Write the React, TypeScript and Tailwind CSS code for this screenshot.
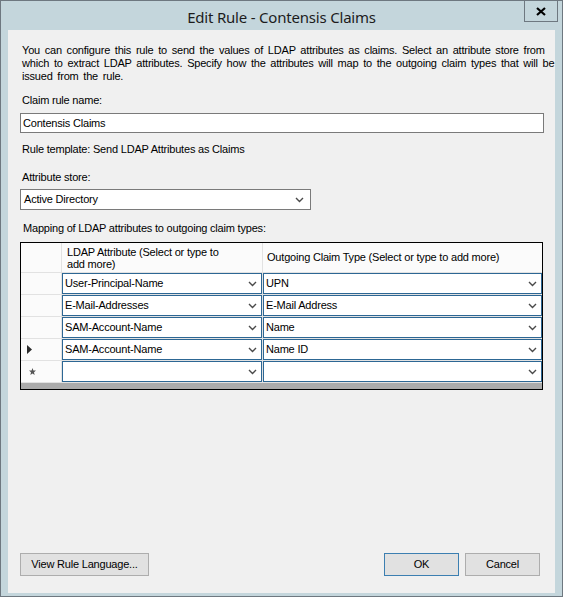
import React from "react";

const ROWS: { attr: string; claim: string; glyph?: "current" | "new" }[] = [
  { attr: "User-Principal-Name", claim: "UPN" },
  { attr: "E-Mail-Addresses", claim: "E-Mail Address" },
  { attr: "SAM-Account-Name", claim: "Name" },
  { attr: "SAM-Account-Name", claim: "Name ID", glyph: "current" },
  { attr: "", claim: "", glyph: "new" },
];

function Chevron() {
  return (
    <svg width="9" height="6" viewBox="0 0 9 6" className="shrink-0">
      <path d="M1 1 L4.5 4.5 L8 1" fill="none" stroke="#4a4a4a" strokeWidth="1.4" />
    </svg>
  );
}

function ComboCell({ value, width }: { value: string; width: string }) {
  return (
    <div className={`${width} flex h-full items-center border border-[#2d6794] bg-white pl-[2px] pr-[4px]`}>
      <span className="flex-1 truncate">{value}</span>
      <Chevron />
    </div>
  );
}

function RowHeader({ glyph }: { glyph?: "current" | "new" }) {
  return (
    <div className="flex w-[40px] shrink-0 items-center bg-[#fbfbfb] pl-[6px]">
      {glyph === "current" && (
        <svg width="5" height="9" viewBox="0 0 5 9">
          <polygon points="0,0 5,4.5 0,9" fill="#2b2b2b" />
        </svg>
      )}
      {glyph === "new" && (
        <svg width="7" height="7" viewBox="0 0 7 7" className="ml-[2px]">
          <polygon points="3.5,0 4.4,2.4 7,2.6 5,4.3 5.6,7 3.5,5.6 1.4,7 2,4.3 0,2.6 2.6,2.4" fill="#555" />
        </svg>
      )}
    </div>
  );
}

function Button({ children, width, primary }: { children: React.ReactNode; width: string; primary?: boolean }) {
  return (
    <button
      type="button"
      className={`${width} flex h-[23px] items-center justify-center border bg-[#e1e1e1] text-black ${primary ? "border-[#3c7fb1]" : "border-[#adadad]"}`}
    >
      {children}
    </button>
  );
}

export default function App() {
  return (
    <div className="flex h-[597px] w-[563px] flex-col border border-[#6e7880] bg-[#c4d6dc] font-['Liberation_Sans',Arial,sans-serif] text-[11px] tracking-[-0.2px] text-black">
      {/* title bar */}
      <div className="relative flex h-[29px] shrink-0 items-center justify-center">
        <span className="mt-[3px] font-['Noto_Sans',sans-serif] text-[15px] leading-none tracking-[-0.2px] text-[#1c1c1c]">
          Edit Rule - Contensis Claims
        </span>
        <div className="absolute right-[4px] top-[-1px] flex h-[22px] w-[34px] items-center justify-center border border-[#6e7880]">
          <svg width="10" height="9" viewBox="0 0 10 9">
            <path d="M1 1 L9 8 M9 1 L1 8" stroke="#000" strokeWidth="2.2" />
          </svg>
        </div>
      </div>

      {/* client area */}
      <div className="mx-[7px] mb-[3px] flex flex-1 flex-col bg-[#f0f0f0] px-[12px]">
        <p className="mt-[14px] whitespace-nowrap pl-[2px] leading-[13px] [word-spacing:1.9px]">
          You can configure this rule to send the values of LDAP attributes as claims. Select an attribute store from
          <br />
          which to extract LDAP attributes. Specify how the attributes will map to the outgoing claim types that will be
          <br />
          issued from the rule.
        </p>

        <div className="mt-[11px] pl-[2px] leading-[13px]">Claim rule name:</div>
        <div className="mt-[6px] flex h-[20px] w-[524px] items-center border border-[#7a7a7a] bg-white pl-[2px]">
          Contensis Claims
        </div>

        <div className="mt-[10px] pl-[2px] leading-[13px]">Rule template: Send LDAP Attributes as Claims</div>

        <div className="mt-[15px] pl-[2px] leading-[13px]">Attribute store:</div>
        <div className="mt-[5px] flex h-[21px] w-[291px] items-center border border-[#7a7a7a] bg-white pl-[3px] pr-[6px]">
          <span className="flex-1">Active Directory</span>
          <Chevron />
        </div>

        <div className="mt-[12px] pl-[3px] leading-[13px]">Mapping of LDAP attributes to outgoing claim types:</div>

        {/* data grid */}
        <div className="mt-[7px] h-[148px] w-[523px] border border-black bg-[#ababab]">
          <div className="flex flex-col gap-px bg-[#e2e2e2] pb-px">
            <div className="flex h-[29px] gap-px">
              <div className="w-[40px] shrink-0 bg-[#fbfbfb]" />
              <div className="flex w-[200px] shrink-0 items-center bg-[#fbfbfb] px-[5px] leading-[12px]">
                <span className="w-[158px]">LDAP Attribute (Select or type to add more)</span>
              </div>
              <div className="flex flex-1 items-center bg-[#fbfbfb] px-[4px]">
                Outgoing Claim Type (Select or type to add more)
              </div>
            </div>
            {ROWS.map((r, i) => (
              <div key={i} className="flex h-[21px] gap-px">
                <RowHeader glyph={r.glyph} />
                <ComboCell value={r.attr} width="w-[200px] shrink-0" />
                <ComboCell value={r.claim} width="flex-1" />
              </div>
            ))}
          </div>
        </div>

        <div className="flex-1" />

        <div className="mb-[17px] flex items-center pr-[3px]">
          <Button width="w-[129px]">View Rule Language...</Button>
          <div className="flex-1" />
          <Button width="w-[75px]" primary>
            OK
          </Button>
          <div className="w-[6px]" />
          <Button width="w-[75px]">Cancel</Button>
        </div>
      </div>
    </div>
  );
}
